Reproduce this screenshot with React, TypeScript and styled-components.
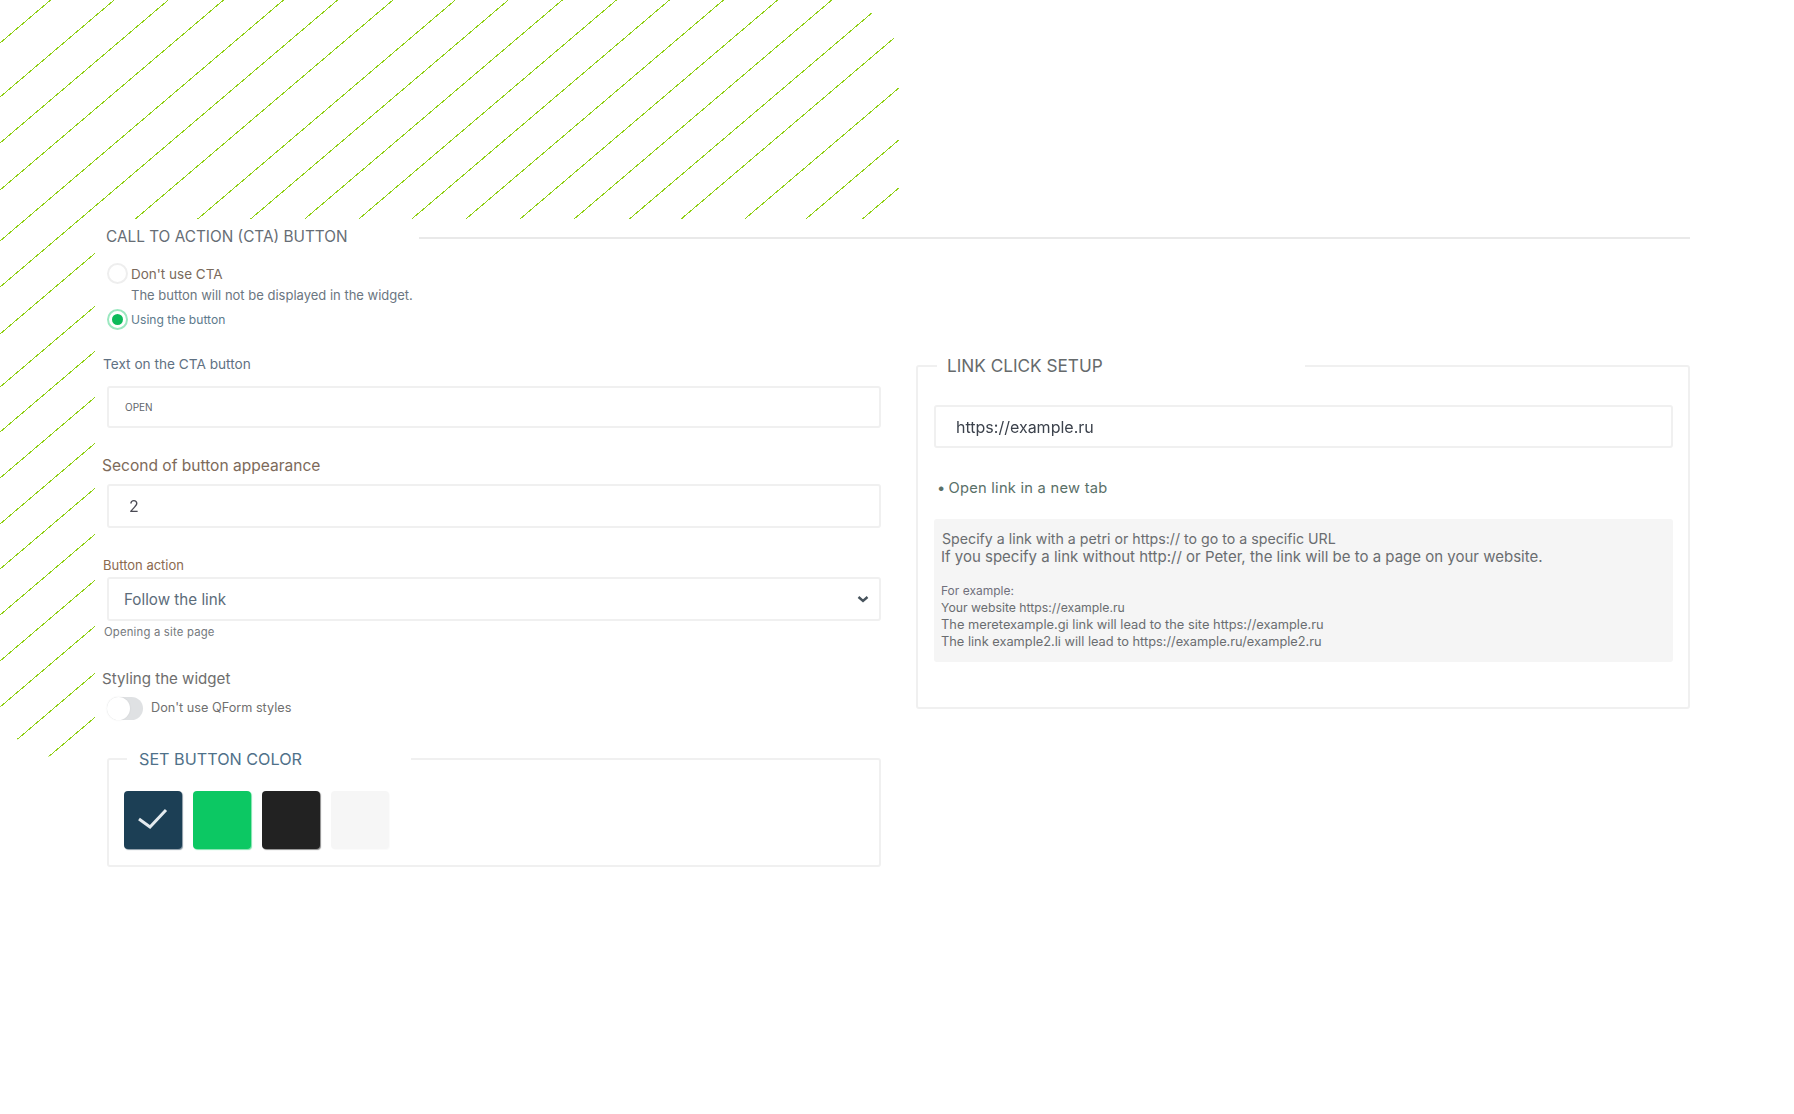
import React from "react";
import styled, { createGlobalStyle } from "styled-components";

const Global = createGlobalStyle`
  html, body { margin: 0; padding: 0; background: #fff; }
  body { font-family: Inter, Roboto, "Noto Sans", Arial, sans-serif; }
  * { box-sizing: border-box; }
`;

const Page = styled.div`
  position: relative;
  width: 1794px;
  height: 1114px;
  padding: 225px 104px 0 102px;
  overflow: hidden;
`;

const Hatch = styled.svg`
  position: absolute;
  left: 0;
  top: 0;
  pointer-events: none;
`;

const Outer = styled.fieldset`
  margin: 0;
  padding: 0;
  min-width: 0;
  border: 0;
  border-top: 2px solid #e9e9e9;
`;

const OuterLegend = styled.legend`
  padding: 0 71px 2px 4px;
  margin-left: 0;
  font-size: 15.35px;
  line-height: 24px;
  color: #666d75;
  background: #fff;
`;

const Columns = styled.div`
  display: grid;
  grid-template-columns: 779px 774px;
  column-gap: 35px;
  align-items: start;
`;

const LeftCol = styled.div`
  display: flex;
  flex-direction: column;
`;

const RadioRow = styled.div<{ $top: number }>`
  display: flex;
  align-items: center;
  gap: 3px;
  margin: ${(p) => p.$top}px 0 0 5px;
`;

const RadioMark = styled.span<{ $on?: boolean }>`
  width: 21px;
  height: 21px;
  flex: none;
  border-radius: 50%;
  border: 2px solid ${(p) => (p.$on ? "#9be8c0" : "#eeeeee")};
  display: flex;
  align-items: center;
  justify-content: center;
  &::after {
    content: "";
    width: 11px;
    height: 11px;
    border-radius: 50%;
    background: ${(p) => (p.$on ? "#0cba5a" : "transparent")};
  }
`;

const RadioText = styled.span<{ $size: number; $color: string }>`
  font-size: ${(p) => p.$size}px;
  line-height: 18px;
  color: ${(p) => p.$color};
`;

const RadioHint = styled.div`
  margin: 2px 0 0 29px;
  padding-bottom: 1px;
  font-size: 13px;
  line-height: 18px;
  color: #6b7681;
`;

const Label = styled.div<{ $top: number; $size: number; $color: string; $left: number }>`
  margin: ${(p) => p.$top}px 0 0 ${(p) => p.$left}px;
  font-size: ${(p) => p.$size}px;
  line-height: 20px;
  color: ${(p) => p.$color};
`;

const Box = styled.div<{ $h: number; $top: number; $left?: number; $pad?: number }>`
  position: relative;
  height: ${(p) => p.$h}px;
  margin: ${(p) => p.$top}px 0 0 ${(p) => p.$left ?? 5}px;
  padding-left: ${(p) => p.$pad ?? 16}px;
  display: flex;
  align-items: center;
  border: 2px solid #f0f0f0;
  border-radius: 3px;
  background: #fff;
`;

const BoxText = styled.span<{ $size: number; $color: string; $soft?: boolean }>`
  font-size: ${(p) => p.$size}px;
  color: ${(p) => p.$color};
  ${(p) => (p.$soft ? "filter: blur(0.6px);" : "")}
`;

const Chevron = styled.svg`
  position: absolute;
  right: 10px;
  top: 16px;
`;

const Note = styled.div`
  margin: 3px 0 0 2px;
  font-size: 11.3px;
  line-height: 16px;
  letter-spacing: 0.2px;
  color: #75797d;
`;

const ToggleRow = styled.div`
  display: flex;
  align-items: center;
  gap: 8px;
  margin: 8px 0 0 5px;
`;

const Toggle = styled.span`
  position: relative;
  width: 36px;
  height: 23px;
  border-radius: 12px;
  background: #dfe1e3;
  &::after {
    content: "";
    position: absolute;
    left: 0;
    top: 0;
    width: 23px;
    height: 23px;
    border-radius: 50%;
    background: #fff;
    box-shadow: 0 0 2px rgba(0, 0, 0, 0.08);
  }
`;

const ToggleText = styled.span`
  font-size: 12.7px;
  line-height: 18px;
  margin-top: -2px;
  color: #6f6f6f;
`;

const Panel = styled.fieldset<{ $top: number; $left: number }>`
  margin: ${(p) => p.$top}px 0 0 ${(p) => p.$left}px;
  min-width: 0;
  border: 2px solid #f0f0f0;
  border-radius: 3px;
`;

const PanelLegend = styled.legend<{ $size: number; $color: string; $right: number; $inset: number }>`
  margin-left: 3px;
  padding: 0 ${(p) => p.$right}px 0 ${(p) => p.$inset}px;
  font-size: ${(p) => p.$size}px;
  line-height: 22px;
  color: ${(p) => p.$color};
`;

const ColorPanel = styled(Panel)`
  height: 119px;
  padding: 21px 15px 0;
`;

const Swatches = styled.div`
  display: flex;
  gap: 11px;
`;

const Swatch = styled.div<{ $bg: string; $edge: string }>`
  width: 58px;
  height: 58px;
  border-radius: 4px;
  background: ${(p) => p.$bg};
  box-shadow: 1px 1px 1px ${(p) => p.$edge};
  display: flex;
  align-items: center;
  justify-content: center;
`;

const RightPanel = styled(Panel)`
  height: 354px;
  padding: 28px 15px 0 16px;
`;

const OpenTab = styled.div`
  margin: 30px 0 0 3px;
  font-size: 14.7px;
  line-height: 20px;
  letter-spacing: 0.25px;
  color: #5a7068;
`;

const Info = styled.div`
  margin-top: 21px;
  height: 143px;
  padding: 11px 7px 0 8px;
  background: #f5f5f5;
  border-radius: 3px;
  color: #6a6d70;
`;

const InfoLine = styled.div<{ $size: number; $h: number; $top?: number; $color?: string; $shift?: number }>`
  font-size: ${(p) => p.$size}px;
  line-height: ${(p) => p.$h}px;
  margin-top: ${(p) => p.$top ?? 0}px;
  margin-left: ${(p) => p.$shift ?? 0}px;
  color: ${(p) => p.$color ?? "inherit"};
`;

const levels = [43, 97, 143, 190, 241, 287, 334, 387, 432, 478, 524, 569, 615, 661, 707, 754, 798, 852, 904, 952];

export default function App() {
  return (
    <Page>
      <Global />
      <Hatch width="910" height="770" viewBox="0 0 910 770" aria-hidden="true">
        <defs>
          <clipPath id="hatchClip">
            <polygon points="0,0 860,0 899,44 899,219 95,219 95,740 47,757 17,739 0,706" />
          </clipPath>
        </defs>
        <g clipPath="url(#hatchClip)" stroke="#8fd014" strokeWidth="1" fill="none" shapeRendering="crispEdges">
          {levels.map((c) => (
            <line key={c} x1={0} y1={c} x2={c / 0.85} y2={0} />
          ))}
        </g>
      </Hatch>
      <Outer>
        <OuterLegend>CALL TO ACTION (CTA) BUTTON</OuterLegend>
        <Columns>
          <LeftCol>
            <RadioRow $top={12}>
              <RadioMark />
              <RadioText $size={13.5} $color="#7a6a5c">Don't use CTA</RadioText>
            </RadioRow>
            <RadioHint>The button will not be displayed in the widget.</RadioHint>
            <RadioRow $top={4}>
              <RadioMark $on />
              <RadioText $size={12.1} $color="#5d7a8c">Using the button</RadioText>
            </RadioRow>
            <Label $top={24} $size={13.65} $color="#5f7183" $left={1}>Text on the CTA button</Label>
            <Box $h={42} $top={12}>
              <BoxText $size={10} $color="#5f666c">OPEN</BoxText>
            </Box>
            <Label $top={28} $size={15.55} $color="#7d6a5a" $left={0}>Second of button appearance</Label>
            <Box $h={44} $top={8} $pad={20}>
              <BoxText $size={16} $color="#4a4a54" $soft>2</BoxText>
            </Box>
            <Label $top={27} $size={13} $color="#8b6a4f" $left={1}>Button action</Label>
            <Box $h={44} $top={2} $pad={15}>
              <BoxText $size={15.2} $color="#5c6c7a">Follow the link</BoxText>
              <Chevron width="12" height="9" viewBox="0 0 12 9">
                <path d="M1.5 2 L6 6 L10.5 2" stroke="#47535c" strokeWidth="2.4" fill="none" />
              </Chevron>
            </Box>
            <Note>Opening a site page</Note>
            <Label $top={29} $size={15.1} $color="#6e6e6e" $left={0}>Styling the widget</Label>
            <ToggleRow>
              <Toggle />
              <ToggleText>Don't use QForm styles</ToggleText>
            </ToggleRow>
            <ColorPanel $top={28} $left={5}>
              <PanelLegend $size={16.2} $color="#4f7189" $right={109} $inset={12}>SET BUTTON COLOR</PanelLegend>
              <Swatches>
                <Swatch $bg="#1c3f55" $edge="#8a9aa6">
                  <svg width="30" height="24" viewBox="0 0 30 24">
                    <path d="M1 11 L12 19 L28 2" stroke="#e4eaee" strokeWidth="3" fill="none" />
                  </svg>
                </Swatch>
                <Swatch $bg="#0cc863" $edge="#7fe3ad" />
                <Swatch $bg="#222222" $edge="#8c8c8c" />
                <Swatch $bg="#f6f6f6" $edge="#fbfbfb" />
              </Swatches>
            </ColorPanel>
          </LeftCol>
          <RightPanel $top={104} $left={0}>
            <PanelLegend $size={17.2} $color="#666a6c" $right={202} $inset={10}>LINK CLICK SETUP</PanelLegend>
            <Box $h={43} $top={0} $left={0} $pad={20}>
              <BoxText $size={16} $color="#3c424c" $soft>https://example.ru</BoxText>
            </Box>
            <OpenTab>•&#8201;Open link in a new tab</OpenTab>
            <Info>
              <InfoLine $size={14.2} $h={17}>Specify a link with a petri or https:// to go to a specific URL</InfoLine>
              <InfoLine $size={15} $h={18} $top={1} $shift={-1}>If you specify a link without http:// or Peter, the link will be to a page on your website.</InfoLine>
              <InfoLine $size={12} $h={17} $top={16} $color="#70707c" $shift={-1}>For example:</InfoLine>
              <InfoLine $size={12.25} $h={17} $shift={-1}>Your website https://example.ru</InfoLine>
              <InfoLine $size={12.85} $h={17} $shift={-1}>The meretexample.gi link will lead to the site https://example.ru</InfoLine>
              <InfoLine $size={12.8} $h={17} $shift={-1}>The link example2.li will lead to https://example.ru/example2.ru</InfoLine>
            </Info>
          </RightPanel>
        </Columns>
      </Outer>
    </Page>
  );
}
